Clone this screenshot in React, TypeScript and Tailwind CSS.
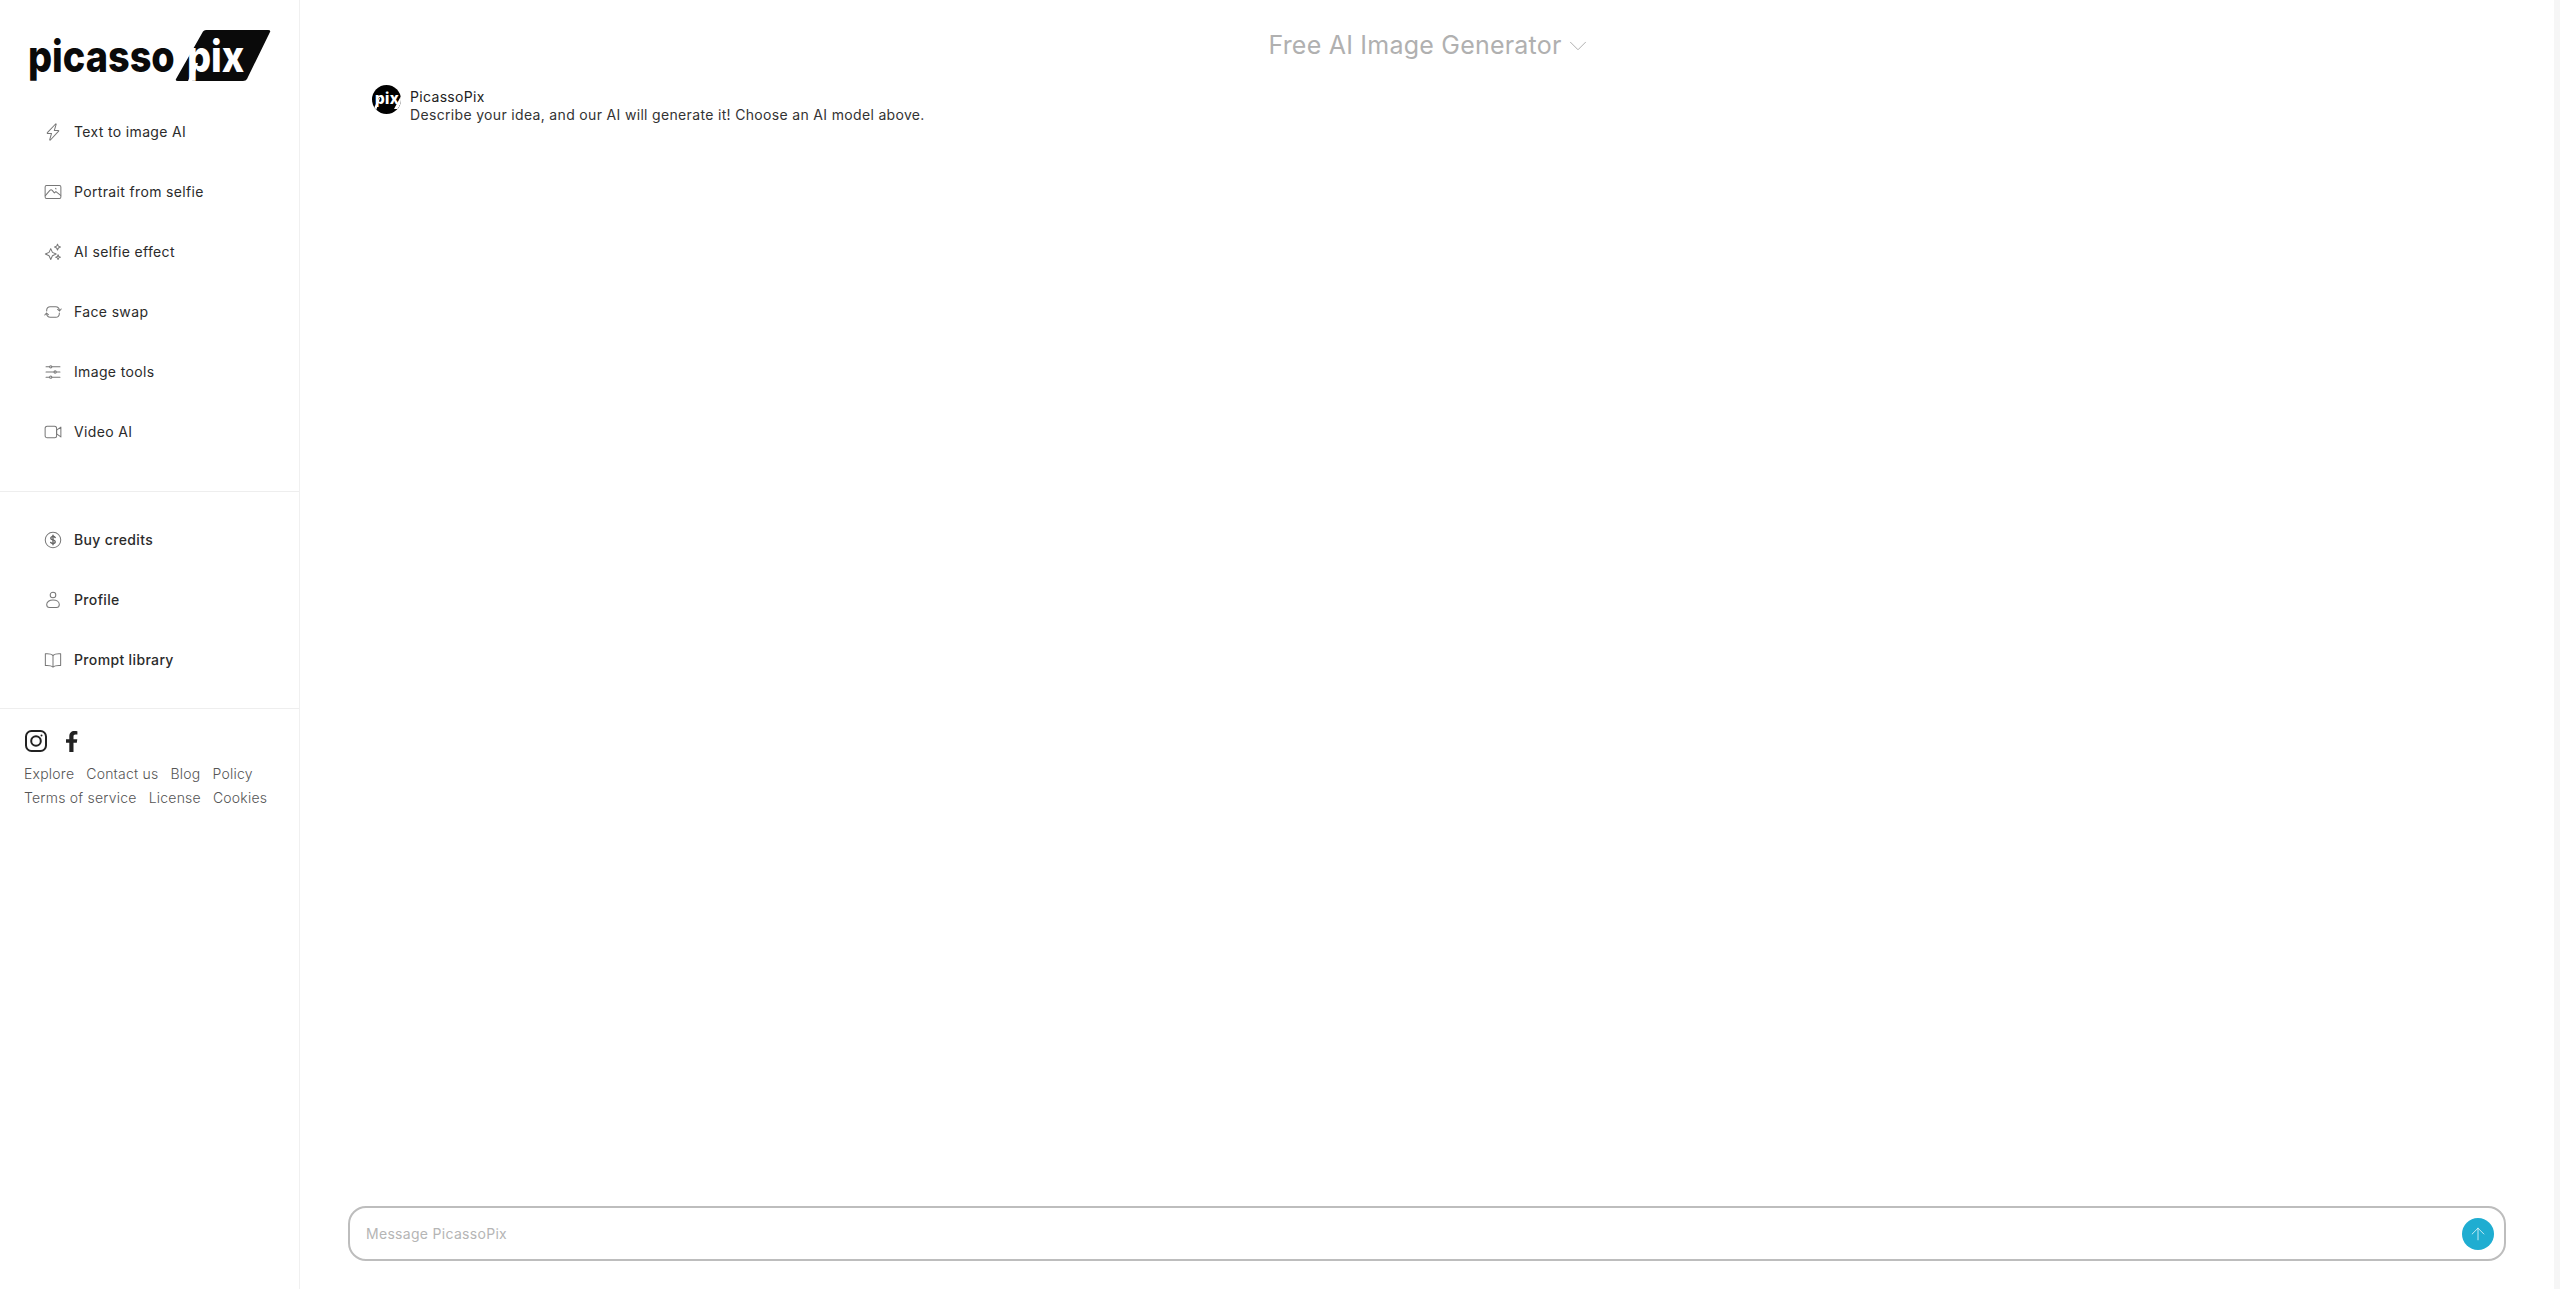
import React from "react";
import { ChevronDown, ArrowUp } from "lucide-react";

const font = "font-['Inter','Noto_Sans',sans-serif]";

const Ico = ({ children }: { children: React.ReactNode }) => (
  <svg width="18" height="18" viewBox="0 0 16 16" fill="none" stroke="#777" strokeWidth="0.9" strokeLinecap="round" strokeLinejoin="round" className="shrink-0">
    {children}
  </svg>
);

const icons = {
  zap: <Ico><path d="M10.300.9 3 8.600c-.3.3-.1.7.3.7h3.400l-1.600 5.500c-.1.4.3.6.6.3L13 7.300c.3-.3.1-.7-.3-.7H9.200L10.800 1.200c.1-.4-.2-.6-.5-.3z" /></Ico>,
  image: <Ico><rect x="1" y="2.300" width="14" height="11.400" rx="1.200" /><path d="M1.200 11.200 5.200 6.600c.7-.7 1.500-.7 2.100 0l1.900 2.200 1.400-1.200 4.200 3.400" /><path d="m10.300 4.800.4.4" /></Ico>,
  stars: <Ico><path d="M6 5 7.500 8.300 10.800 9.800 7.500 11.300 6 14.600 4.500 11.300 1.200 9.800 4.500 8.300z" /><path d="M12 1 12.800 2.800 14.600 3.600 12.800 4.400 12 6.200 11.200 4.400 9.400 3.600 11.200 2.800z" /><path d="m12.500 10.500.6 1.500 1.500.6-1.500.6-.6 1.500-.6-1.500-1.500-.6 1.500-.6z" /></Ico>,
  swap: <Ico><path d="M2.400 7.200V6.300a3 3 0 0 1 3-3h5a3.300 3.300 0 0 1 3.300 3.600" /><path d="m15.300 5.300-1.500 1.800-1.700-1.500" /><path d="M13.600 8.800v.9a3 3 0 0 1-3 3h-5a3.300 3.300 0 0 1-3.300-3.600" /><path d="m.7 10.700 1.500-1.800 1.700 1.500" /></Ico>,
  sliders: <Ico><path d="M1.800 3.400h3.200M7 3.400h7.200M1.800 8h7M11 8h3.200M1.800 12.600h3.200M7 12.600h7.200" /><circle cx="6" cy="3.400" r="1" /><circle cx="9.900" cy="8" r="1" /><circle cx="6" cy="12.600" r="1" /></Ico>,
  video: <Ico><rect x="1" y="2.800" width="10.200" height="10.400" rx="1.800" /><path d="M15 3.600v8.800l-3.800-2.700V6.300z" /></Ico>,
  dollar: <Ico><circle cx="8" cy="8" r="6.900" /><g strokeWidth="1.200" stroke="#666"><path d="M10 5.800C9.600 5.200 8.900 4.900 8 4.900c-1.100 0-2 .6-2 1.500C6 8.400 10 7.400 10 9.500c0 1-.9 1.600-2 1.600-.9 0-1.700-.3-2.100-1" /><path d="M8 3.700v8.600" /></g></Ico>,
  user: <Ico><circle cx="8" cy="3.600" r="2.500" /><path d="M8 8c-3.200 0-5.600 1.700-5.600 4 0 1.600 1.100 2.700 2.500 2.700h6.200c1.400 0 2.500-1.100 2.500-2.700 0-2.300-2.400-4-5.600-4z" /></Ico>,
  book: <Ico><path d="M8 3.800C6.500 2.600 4 2.300 1.200 2.500v10.400c2.800-.2 5.300.1 6.800 1.300 1.500-1.200 4-1.500 6.800-1.300V2.500C12 2.300 9.500 2.600 8 3.800z" /><path d="M8 3.800v10.400" /></Ico>,
};

const NavItem = ({ icon, label, strong }: { icon: React.ReactNode; label: string; strong?: boolean }) => (
  <a className={`flex h-[60px] items-center gap-[12px] pl-[44px] text-[14px] tracking-[0.35px] text-[#2b2b2b] ${strong ? "font-medium" : "font-normal"}`}>
    {icon}
    <span className="pb-px">{label}</span>
  </a>
);

const Logo = () => (
  <svg width="244" height="54" viewBox="0 0 244 54" className="block overflow-visible">
    <path d="M174 1.500Q175 0 177 0H239Q242 0 241 2L218 49Q217 51 214 51H149Q146 51 147 49z" fill="#0a0a0a" />
    <path d="M159 51 167 33H169L163 51z" fill="#fff" />
    <text transform="translate(-1 42) scale(0.86 1)" fontFamily="Inter, sans-serif" fontWeight="800" fontSize="44" fill="#0a0a0a">picasso</text>
    <text transform="translate(158 42) scale(0.86 1)" fontFamily="Inter, sans-serif" fontWeight="800" fontSize="44" fill="#fff">pix</text>
  </svg>
);

const Avatar = () => (
  <svg width="29" height="29" viewBox="0 0 29 29" className="mt-[-3px] shrink-0">
    <defs>
      <clipPath id="avatar-clip"><circle cx="14.500" cy="14.500" r="14.500" /></clipPath>
    </defs>
    <g clipPath="url(#avatar-clip)">
      <rect width="29" height="29" fill="#000" />
      <path d="M-1 29 7 13H8L3 29z" fill="#fff" />
      <path d="M30 9 22 24H26L30 16z" fill="#fff" />
      <text x="3" y="19" fontFamily="Inter, sans-serif" fontWeight="800" fontSize="15" textLength="24" lengthAdjust="spacingAndGlyphs" fill="#fff">pix</text>
    </g>
  </svg>
);

const Footer = () => (
  <div className="flex flex-wrap gap-x-[12px] pl-[24px] pr-[20px] text-[14px] font-light leading-[24px] tracking-[0.22px] text-[#555]">
    {["Explore", "Contact us", "Blog", "Policy", "Terms of service", "License", "Cookies"].map((t) => (
      <a key={t}>{t}</a>
    ))}
  </div>
);

export default function App() {
  return (
    <div className={`flex h-[1289px] w-[2560px] overflow-hidden bg-white ${font}`}>
      <aside className="flex w-[300px] shrink-0 flex-col border-r border-[#f0f0f0]">
        <div className="pl-[29px] pt-[30px]"><Logo /></div>
        <nav className="mt-[18px] border-b border-[#eeeeee] pb-[29px]">
          <NavItem icon={icons.zap} label="Text to image AI" />
          <NavItem icon={icons.image} label="Portrait from selfie" />
          <NavItem icon={icons.stars} label="AI selfie effect" />
          <NavItem icon={icons.swap} label="Face swap" />
          <NavItem icon={icons.sliders} label="Image tools" />
          <NavItem icon={icons.video} label="Video AI" />
        </nav>
        <nav className="border-b border-[#eeeeee] pb-[18px] pt-[18px]">
          <NavItem strong icon={icons.dollar} label="Buy credits" />
          <NavItem strong icon={icons.user} label="Profile" />
          <NavItem strong icon={icons.book} label="Prompt library" />
        </nav>
        <div className="flex items-center gap-[19px] pl-[25px] pt-[21px] pb-[10px]">
          <svg width="22" height="22" viewBox="0 0 22 22" fill="none" stroke="#222" strokeWidth="2">
            <rect x="1" y="1" width="20" height="20" rx="5.500" />
            <circle cx="11" cy="11" r="4.800" />
            <circle cx="16.500" cy="5.500" r="1" fill="#222" stroke="none" />
          </svg>
          <svg width="12" height="21" viewBox="0 0 12 21" fill="#222">
            <path d="M3.300 21V11.800H0V8.200h3.300V5.400C3.300 2 5.300 0 8.400 0c1.400 0 2.700.1 3 .2v3.200H9.500C7.900 3.400 7.500 4.200 7.500 5.300v2.900h3.800l-.5 3.600H7.500V21z" />
          </svg>
        </div>
        <Footer />
      </aside>
      <main className="flex min-w-0 flex-1 flex-col px-[48px]">
        <header className="flex h-[88px] shrink-0 items-start justify-center pt-[29px]">
          <div className="flex items-center gap-[1px] text-[25px] leading-[33px] tracking-[0.22px] text-[#b0b0b0]">
            <span>Free AI Image Generator</span>
            <ChevronDown size={30} strokeWidth={0.8} className="mr-[-7px]" />
          </div>
        </header>
        <div className="flex flex-1 items-start gap-[9px] px-[24px] text-[14px] leading-[18px] tracking-[0.33px] text-[#333]">
          <Avatar />
          <div>
            <div className="text-[#222]">PicassoPix</div>
            <div>Describe your idea, and our AI will generate it! Choose an AI model above.</div>
          </div>
        </div>
        <form className="mb-[28px] flex h-[55px] shrink-0 items-center justify-between rounded-[18px] border-2 border-[#bdbdbd] pl-[16px] pr-[10px]">
          <span className="text-[14px] tracking-[0.3px] text-[#b5b5b5]">Message PicassoPix</span>
          <button type="button" className="flex h-[32px] w-[32px] items-center justify-center rounded-full bg-[#1fadd1] text-white/80">
            <ArrowUp size={20} strokeWidth={1.1} />
          </button>
        </form>
      </main>
      <div className="w-[6px] shrink-0 bg-[#f6f6f6]" />
    </div>
  );
}
